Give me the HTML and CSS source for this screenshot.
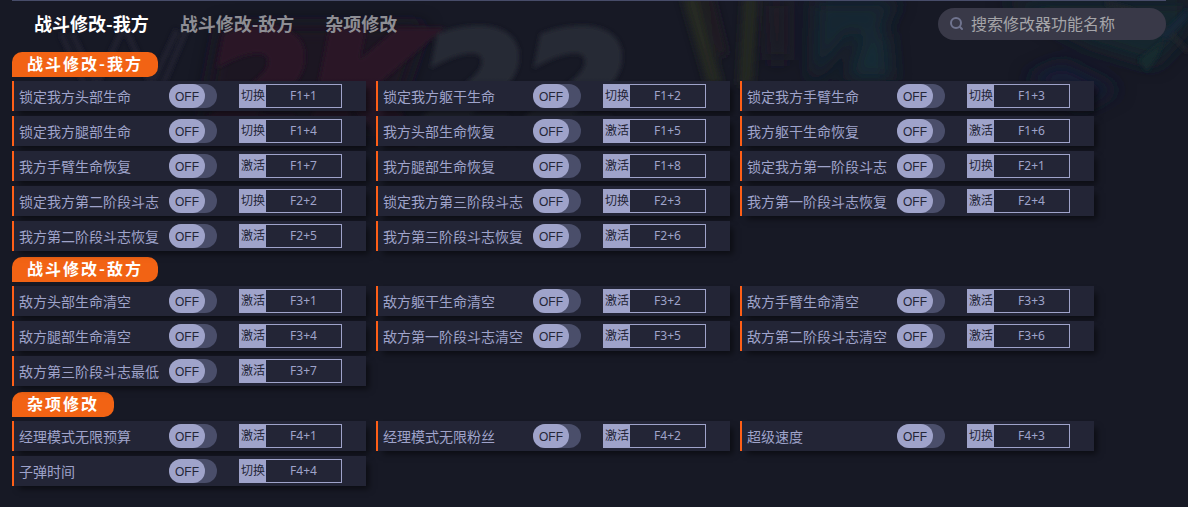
FILE: index.html
```html
<!DOCTYPE html>
<html lang="zh-CN">
<head>
<meta charset="utf-8">
<meta name="viewport" content="width=device-width, initial-scale=1">
<title>战斗修改</title>
<link rel="stylesheet" href="styles.css">
</head>
<body>
<svg class="backdrop" width="1188" height="220" viewBox="0 0 1188 220" aria-hidden="true">
  <defs>
    <filter id="soft" x="-20%" y="-20%" width="140%" height="140%"><feGaussianBlur stdDeviation="2"/></filter>
    <filter id="smooth" x="-40%" y="-40%" width="180%" height="180%"><feGaussianBlur stdDeviation="4"/></filter>
    <filter id="haze" x="-40%" y="-40%" width="180%" height="180%"><feGaussianBlur stdDeviation="9"/></filter>
    <linearGradient id="fade" x1="0" y1="0" x2="0" y2="1"><stop offset="0" stop-color="#fff"/><stop offset=".35" stop-color="#fff"/><stop offset=".8" stop-color="#000"/></linearGradient>
    <mask id="down"><rect width="1188" height="220" fill="url(#fade)"/></mask>
  </defs>
  <g mask="url(#down)">
    <g filter="url(#soft)" fill="none" stroke="#222430" stroke-width="5">
      <path d="M61 33L88 92M72 33L96 84M122 30L90 100M126 30L158 100M187 28L158 96M177 30L152 84"/>
    </g>
    <g filter="url(#haze)">
      <path d="M220 25H425L390 130H200z" fill="#1f1723"/>
      <path d="M815 0H900L880 30L850 35L812 85z" fill="#162530"/>
      <path d="M865 25L888 35L892 80H845z" fill="#152a35"/>
      <path d="M1000 0H1188V30L1155 65L1090 45z" fill="#15262f"/>
      <path d="M1025 78L1062 62L1120 90L1080 110z" fill="#191d35"/>
      <path d="M768 0H785V60H770z" fill="#221a28"/>
    </g>
    <g filter="url(#soft)">
      <g class="logo">
        <text class="logo-red" x="206" y="140">2K</text>
        <text class="logo-gray" x="420" y="140">22</text>
      </g>
      <path d="M1105 3Q1155 12 1188 52" fill="none" stroke="#26282c" stroke-width="3"/>
      <path d="M1138 60L1164 40L1158 56L1147 72z" fill="#16292f"/>
      <path d="M1160 35L1188 8V18L1166 40z" fill="#172538"/>
    </g>
    <g filter="url(#smooth)">
      <path d="M682 -5H698L722 85H708z" fill="#252923"/>
      <path d="M744 -5H758L752 85H739z" fill="#252923"/>
      <path d="M700 -5H712L727 55H719z" fill="#211a24"/>
    </g>
  </g>
</svg>
<main class="app">
  <header class="topbar">
    <nav class="tabs">
      <a class="tab tab-active" href="#own">战斗修改-我方</a>
      <a class="tab" href="#enemy">战斗修改-敌方</a>
      <a class="tab" href="#misc">杂项修改</a>
    </nav>
    <label class="search">
      <svg class="search-icon" width="14" height="14" viewBox="0 0 14 14" fill="none" stroke="#70748f" stroke-width="2" stroke-linecap="round" aria-hidden="true"><circle cx="6" cy="6" r="5"/><path d="M10 10l2 2"/></svg>
      <input class="search-input" type="search" placeholder="搜索修改器功能名称" aria-label="搜索修改器功能名称">
    </label>
  </header>

  <section class="group" id="own">
    <h2 class="group-title">战斗修改-我方</h2>
    <div class="cards">
      <div class="card"><label class="name" for="m1">锁定我方头部生命</label><div class="switch"><input type="checkbox" id="m1"><span class="knob">OFF</span></div><div class="hotkey"><button class="mode">切换</button><button class="key">F1+1</button></div></div>
      <div class="card"><label class="name" for="m2">锁定我方躯干生命</label><div class="switch"><input type="checkbox" id="m2"><span class="knob">OFF</span></div><div class="hotkey"><button class="mode">切换</button><button class="key">F1+2</button></div></div>
      <div class="card"><label class="name" for="m3">锁定我方手臂生命</label><div class="switch"><input type="checkbox" id="m3"><span class="knob">OFF</span></div><div class="hotkey"><button class="mode">切换</button><button class="key">F1+3</button></div></div>
      <div class="card"><label class="name" for="m4">锁定我方腿部生命</label><div class="switch"><input type="checkbox" id="m4"><span class="knob">OFF</span></div><div class="hotkey"><button class="mode">切换</button><button class="key">F1+4</button></div></div>
      <div class="card"><label class="name" for="m5">我方头部生命恢复</label><div class="switch"><input type="checkbox" id="m5"><span class="knob">OFF</span></div><div class="hotkey"><button class="mode">激活</button><button class="key">F1+5</button></div></div>
      <div class="card"><label class="name" for="m6">我方躯干生命恢复</label><div class="switch"><input type="checkbox" id="m6"><span class="knob">OFF</span></div><div class="hotkey"><button class="mode">激活</button><button class="key">F1+6</button></div></div>
      <div class="card"><label class="name" for="m7">我方手臂生命恢复</label><div class="switch"><input type="checkbox" id="m7"><span class="knob">OFF</span></div><div class="hotkey"><button class="mode">激活</button><button class="key">F1+7</button></div></div>
      <div class="card"><label class="name" for="m8">我方腿部生命恢复</label><div class="switch"><input type="checkbox" id="m8"><span class="knob">OFF</span></div><div class="hotkey"><button class="mode">激活</button><button class="key">F1+8</button></div></div>
      <div class="card"><label class="name" for="m9">锁定我方第一阶段斗志</label><div class="switch"><input type="checkbox" id="m9"><span class="knob">OFF</span></div><div class="hotkey"><button class="mode">切换</button><button class="key">F2+1</button></div></div>
      <div class="card"><label class="name" for="m10">锁定我方第二阶段斗志</label><div class="switch"><input type="checkbox" id="m10"><span class="knob">OFF</span></div><div class="hotkey"><button class="mode">切换</button><button class="key">F2+2</button></div></div>
      <div class="card"><label class="name" for="m11">锁定我方第三阶段斗志</label><div class="switch"><input type="checkbox" id="m11"><span class="knob">OFF</span></div><div class="hotkey"><button class="mode">切换</button><button class="key">F2+3</button></div></div>
      <div class="card"><label class="name" for="m12">我方第一阶段斗志恢复</label><div class="switch"><input type="checkbox" id="m12"><span class="knob">OFF</span></div><div class="hotkey"><button class="mode">激活</button><button class="key">F2+4</button></div></div>
      <div class="card"><label class="name" for="m13">我方第二阶段斗志恢复</label><div class="switch"><input type="checkbox" id="m13"><span class="knob">OFF</span></div><div class="hotkey"><button class="mode">激活</button><button class="key">F2+5</button></div></div>
      <div class="card"><label class="name" for="m14">我方第三阶段斗志恢复</label><div class="switch"><input type="checkbox" id="m14"><span class="knob">OFF</span></div><div class="hotkey"><button class="mode">激活</button><button class="key">F2+6</button></div></div>
    </div>
  </section>

  <section class="group" id="enemy">
    <h2 class="group-title">战斗修改-敌方</h2>
    <div class="cards">
      <div class="card"><label class="name" for="m15">敌方头部生命清空</label><div class="switch"><input type="checkbox" id="m15"><span class="knob">OFF</span></div><div class="hotkey"><button class="mode">激活</button><button class="key">F3+1</button></div></div>
      <div class="card"><label class="name" for="m16">敌方躯干生命清空</label><div class="switch"><input type="checkbox" id="m16"><span class="knob">OFF</span></div><div class="hotkey"><button class="mode">激活</button><button class="key">F3+2</button></div></div>
      <div class="card"><label class="name" for="m17">敌方手臂生命清空</label><div class="switch"><input type="checkbox" id="m17"><span class="knob">OFF</span></div><div class="hotkey"><button class="mode">激活</button><button class="key">F3+3</button></div></div>
      <div class="card"><label class="name" for="m18">敌方腿部生命清空</label><div class="switch"><input type="checkbox" id="m18"><span class="knob">OFF</span></div><div class="hotkey"><button class="mode">激活</button><button class="key">F3+4</button></div></div>
      <div class="card"><label class="name" for="m19">敌方第一阶段斗志清空</label><div class="switch"><input type="checkbox" id="m19"><span class="knob">OFF</span></div><div class="hotkey"><button class="mode">激活</button><button class="key">F3+5</button></div></div>
      <div class="card"><label class="name" for="m20">敌方第二阶段斗志清空</label><div class="switch"><input type="checkbox" id="m20"><span class="knob">OFF</span></div><div class="hotkey"><button class="mode">激活</button><button class="key">F3+6</button></div></div>
      <div class="card"><label class="name" for="m21">敌方第三阶段斗志最低</label><div class="switch"><input type="checkbox" id="m21"><span class="knob">OFF</span></div><div class="hotkey"><button class="mode">激活</button><button class="key">F3+7</button></div></div>
    </div>
  </section>

  <section class="group" id="misc">
    <h2 class="group-title">杂项修改</h2>
    <div class="cards">
      <div class="card"><label class="name" for="m22">经理模式无限预算</label><div class="switch"><input type="checkbox" id="m22"><span class="knob">OFF</span></div><div class="hotkey"><button class="mode">激活</button><button class="key">F4+1</button></div></div>
      <div class="card"><label class="name" for="m23">经理模式无限粉丝</label><div class="switch"><input type="checkbox" id="m23"><span class="knob">OFF</span></div><div class="hotkey"><button class="mode">激活</button><button class="key">F4+2</button></div></div>
      <div class="card"><label class="name" for="m24">超级速度</label><div class="switch"><input type="checkbox" id="m24"><span class="knob">OFF</span></div><div class="hotkey"><button class="mode">切换</button><button class="key">F4+3</button></div></div>
      <div class="card"><label class="name" for="m25">子弹时间</label><div class="switch"><input type="checkbox" id="m25"><span class="knob">OFF</span></div><div class="hotkey"><button class="mode">切换</button><button class="key">F4+4</button></div></div>
    </div>
  </section>
</main>
</body>
</html>
```
FILE: styles.css
```css
* {
  box-sizing: border-box;
}

body {
  margin: 0;
  min-height: 100vh;
  background: #171925;
  color: #9fa3ca;
  font-family: "Noto Sans", "Noto Sans CJK SC", sans-serif;
  font-size: 14px;
}

button,
input {
  margin: 0;
  padding: 0;
  border: 0;
  font: inherit;
}

.backdrop {
  position: absolute;
  top: 0;
  left: 0;
}

.logo {
  font-family: "DejaVu Sans", sans-serif;
  font-size: 148px;
  font-style: italic;
  font-weight: 700;
  stroke-width: 9px;
}

.logo-red {
  fill: #2a1826;
  stroke: #2a1826;
}

.logo-gray {
  fill: #272935;
  stroke: #272935;
}

.app {
  position: relative;
  padding: 0 22px 20px 12px;
}

.topbar {
  display: flex;
  align-items: center;
  justify-content: space-between;
  height: 46px;
  border-top: 1px solid #474c69;
}

.tabs {
  display: flex;
  gap: 31px;
  padding: 0 0 2px 22px;
}

.tab {
  color: #8e8e94;
  font-family: "Noto Sans CJK SC", sans-serif;
  font-size: 18px;
  font-weight: 700;
  line-height: 26px;
  text-decoration: none;
}

.tab-active {
  color: #fff;
}

.search {
  display: flex;
  align-items: center;
  gap: 7px;
  width: 228px;
  height: 32px;
  padding: 0 12px;
  border-radius: 16px;
  background: #393948;
}

.search-icon {
  flex: none;
}

.search-input {
  flex: 1;
  min-width: 0;
  height: 24px;
  background: transparent;
  color: #fff;
  font-size: 16px;
  outline: 0;
}

.search-input::placeholder {
  color: #a5a5a9;
  opacity: 1;
}

.group {
  padding-top: 6px;
}

.group-title {
  width: fit-content;
  margin: 0 0 4px;
  padding: 0 15px 2px;
  border-radius: 10px 10px 10px 0;
  background: #f26314;
  color: #fff;
  font-family: "Noto Sans CJK SC", sans-serif;
  font-size: 16px;
  font-weight: 700;
  letter-spacing: 2px;
  line-height: 23px;
}

.cards {
  display: grid;
  grid-template-columns: repeat(auto-fill, 354px);
  gap: 5px 10px;
}

.card {
  display: flex;
  align-items: center;
  height: 30px;
  padding-left: 5px;
  border-left: 2px solid #ff5f17;
  background: #232536;
  box-shadow: 5px 5px 6px -2px rgba(0, 0, 0, 0.5);
}

.name {
  width: 150px;
  padding-top: 2px;
  line-height: 20px;
  white-space: nowrap;
}

.switch {
  display: grid;
  margin-right: 22px;
}

.switch input {
  grid-area: 1 / 1;
  width: 48px;
  height: 24px;
  border-radius: 12px;
  background: #4a4e6a;
  appearance: none;
}

.knob {
  grid-area: 1 / 1;
  width: 36px;
  height: 24px;
  border-radius: 12px;
  background: #9fa3ca;
  color: #232536;
  font-family: "Liberation Sans", sans-serif;
  font-size: 12px;
  line-height: 26px;
  text-align: center;
  pointer-events: none;
}

.hotkey {
  display: flex;
  width: 103px;
  height: 24px;
  border: 1px solid #9fa3ca;
  font-size: 12px;
  line-height: 22px;
}

.mode {
  width: 26px;
  background: #9fa3ca;
  color: #232536;
  white-space: nowrap;
}

.key {
  flex: 1;
  background: transparent;
  color: #9fa3ca;
}
```
